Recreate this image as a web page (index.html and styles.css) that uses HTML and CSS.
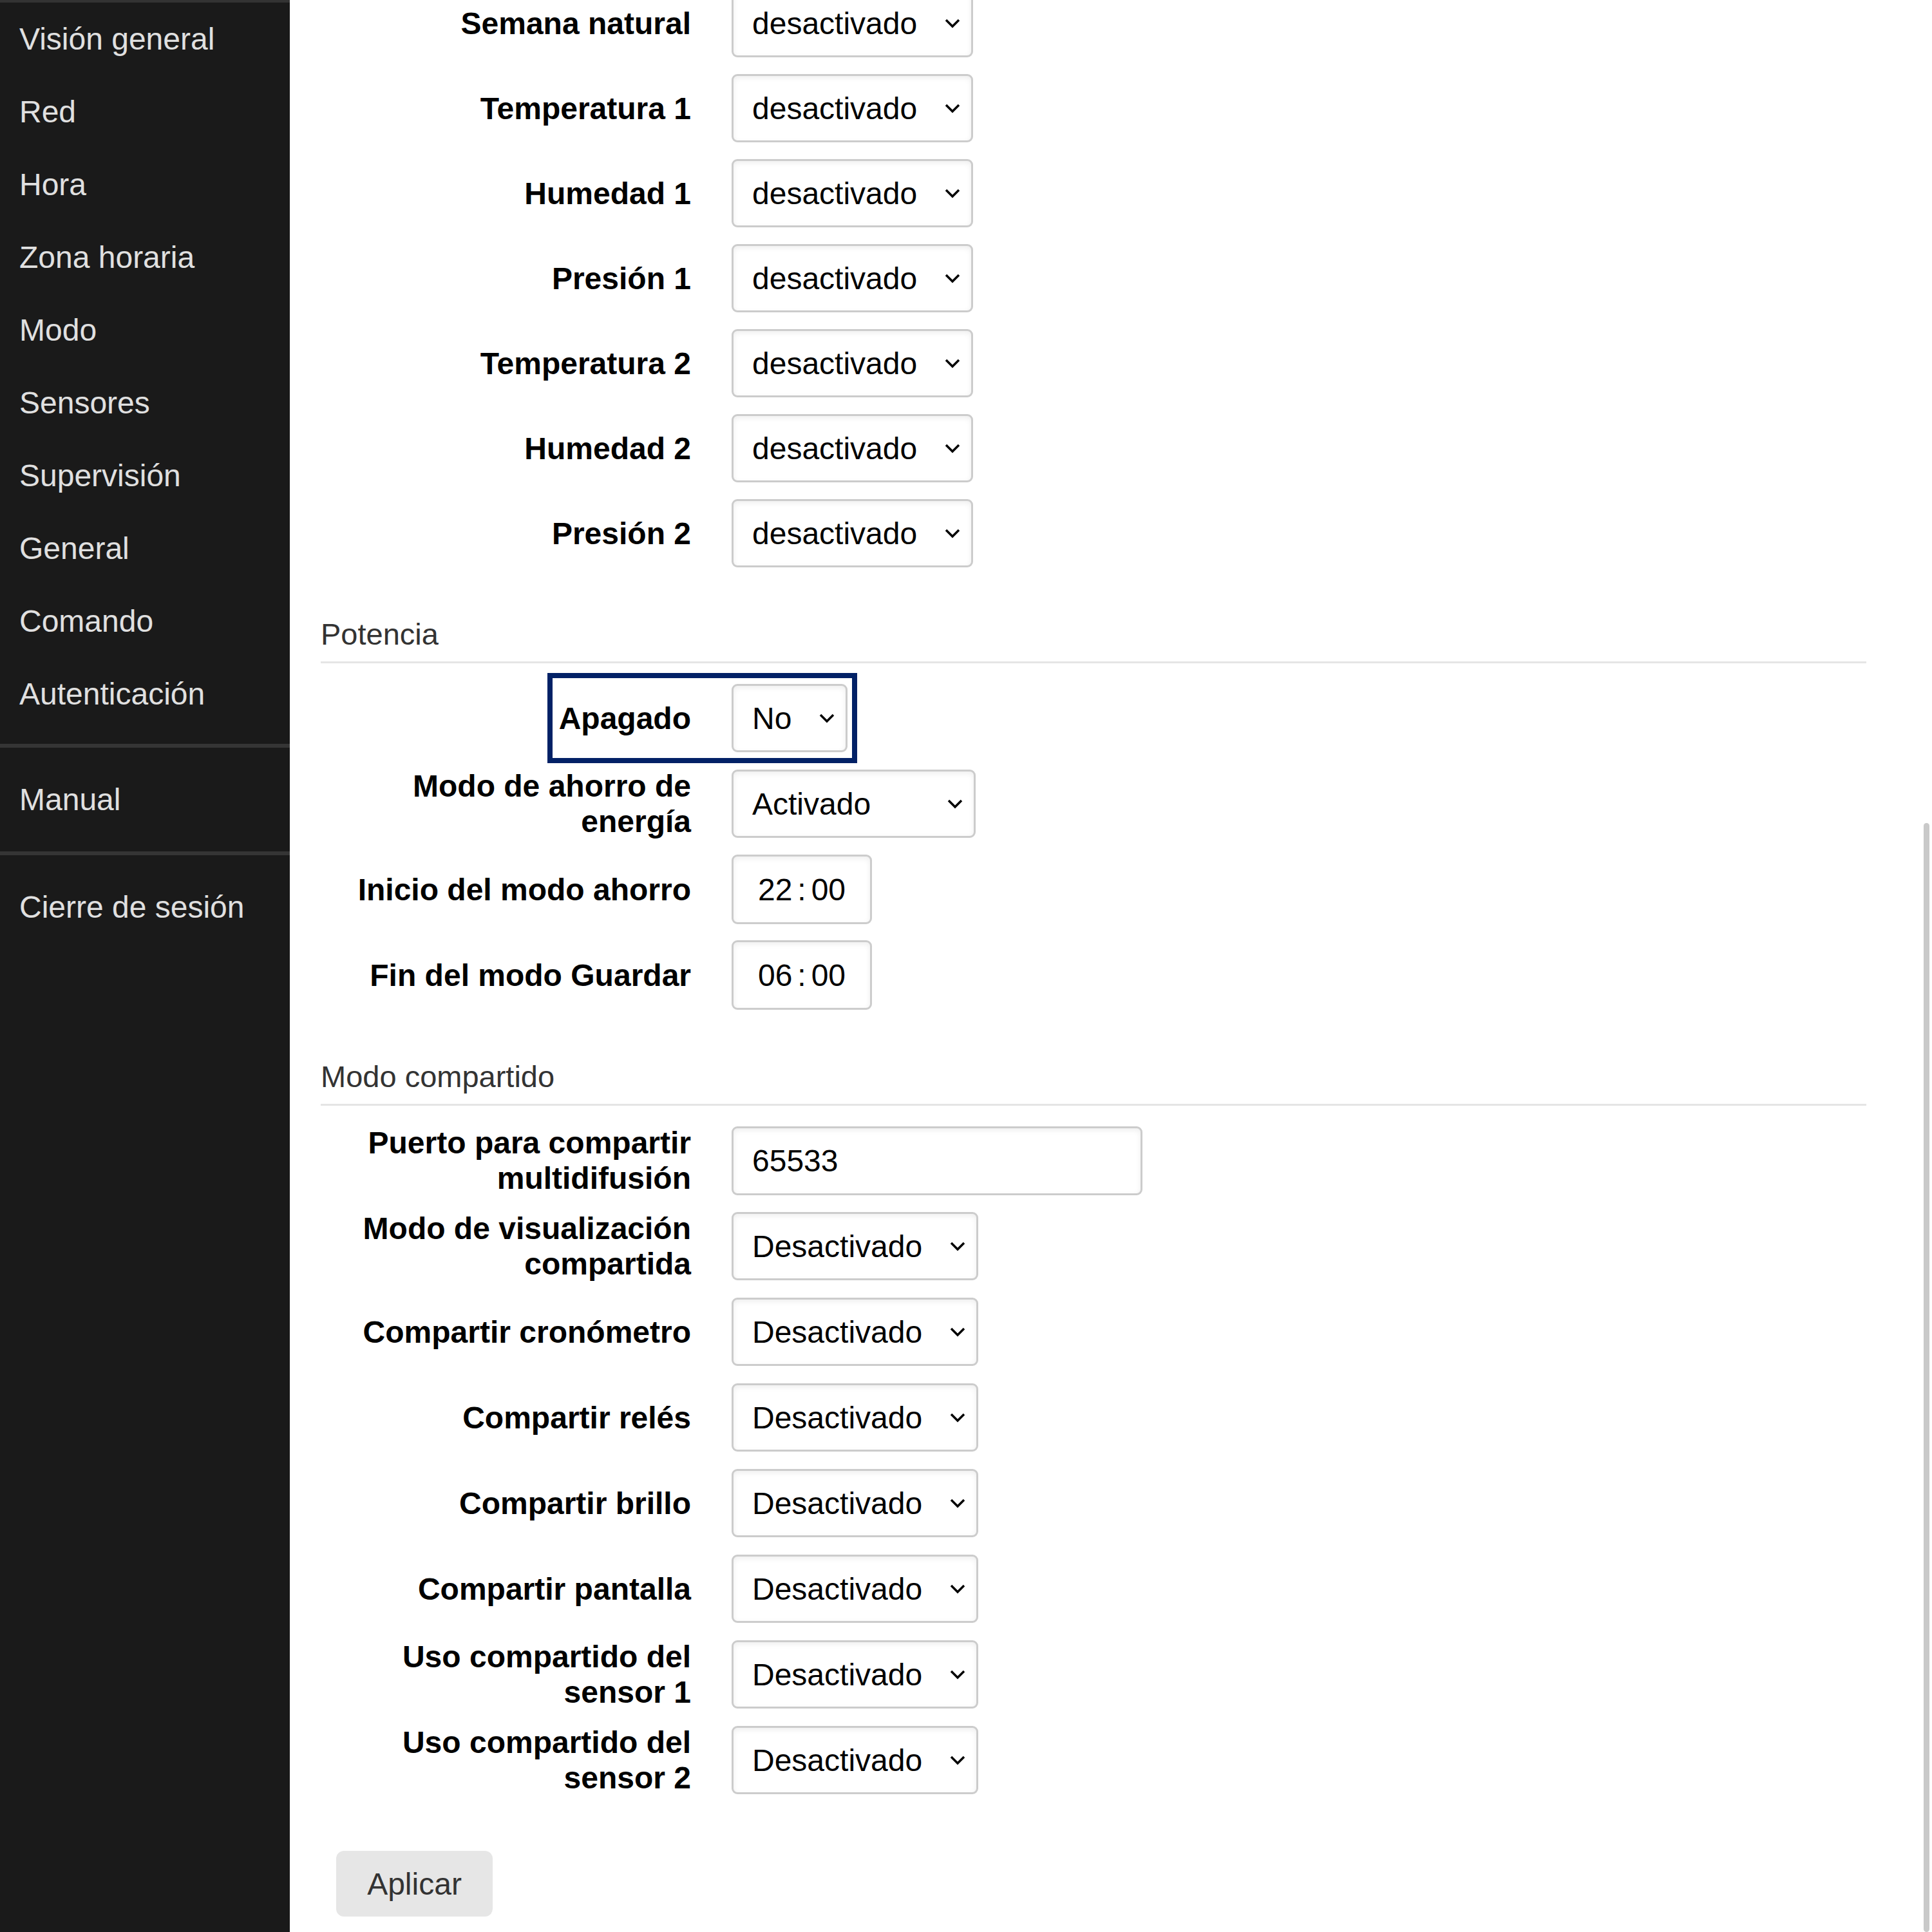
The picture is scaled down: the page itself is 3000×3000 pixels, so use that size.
FILE: index.html
```html
<!DOCTYPE html>
<html lang="es">
<head>
<meta charset="utf-8">
<title>Configuración</title>
<link rel="stylesheet" href="styles.css">
</head>
<body>
<nav class="sidebar">
  <a class="nav-link" href="#">Visión general</a>
  <a class="nav-link" href="#">Red</a>
  <a class="nav-link" href="#">Hora</a>
  <a class="nav-link" href="#">Zona horaria</a>
  <a class="nav-link" href="#">Modo</a>
  <a class="nav-link" href="#">Sensores</a>
  <a class="nav-link" href="#">Supervisión</a>
  <a class="nav-link" href="#">General</a>
  <a class="nav-link" href="#">Comando</a>
  <a class="nav-link" href="#">Autenticación</a>
  <div class="nav-divider first"></div>
  <a class="nav-link" href="#">Manual</a>
  <div class="nav-divider"></div>
  <a class="nav-link" href="#">Cierre de sesión</a>
</nav>

<main class="content">
  <div class="group group-top">
    <div class="row"><div class="label">Semana natural</div><div class="select"><span>desactivado</span><svg class="chev" width="24" height="15" viewBox="0 0 24 15"><path d="M2 2 L12 12 L22 2"/></svg></div></div>
    <div class="row"><div class="label">Temperatura 1</div><div class="select"><span>desactivado</span><svg class="chev" width="24" height="15" viewBox="0 0 24 15"><path d="M2 2 L12 12 L22 2"/></svg></div></div>
    <div class="row"><div class="label">Humedad 1</div><div class="select"><span>desactivado</span><svg class="chev" width="24" height="15" viewBox="0 0 24 15"><path d="M2 2 L12 12 L22 2"/></svg></div></div>
    <div class="row"><div class="label">Presión 1</div><div class="select"><span>desactivado</span><svg class="chev" width="24" height="15" viewBox="0 0 24 15"><path d="M2 2 L12 12 L22 2"/></svg></div></div>
    <div class="row"><div class="label">Temperatura 2</div><div class="select"><span>desactivado</span><svg class="chev" width="24" height="15" viewBox="0 0 24 15"><path d="M2 2 L12 12 L22 2"/></svg></div></div>
    <div class="row"><div class="label">Humedad 2</div><div class="select"><span>desactivado</span><svg class="chev" width="24" height="15" viewBox="0 0 24 15"><path d="M2 2 L12 12 L22 2"/></svg></div></div>
    <div class="row"><div class="label">Presión 2</div><div class="select"><span>desactivado</span><svg class="chev" width="24" height="15" viewBox="0 0 24 15"><path d="M2 2 L12 12 L22 2"/></svg></div></div>
  </div>

  <section class="section section-power">
    <h3 class="section-title">Potencia</h3>
    <div class="group">
      <div class="row focused"><div class="label">Apagado</div><div class="select"><span>No</span><svg class="chev" width="24" height="15" viewBox="0 0 24 15"><path d="M2 2 L12 12 L22 2"/></svg></div></div>
      <div class="row"><div class="label">Modo de ahorro de energía</div><div class="select wide"><span>Activado</span><svg class="chev" width="24" height="15" viewBox="0 0 24 15"><path d="M2 2 L12 12 L22 2"/></svg></div></div>
      <div class="row"><div class="label">Inicio del modo ahorro</div><div class="time-input"><span>22</span><span class="colon">:</span><span>00</span></div></div>
      <div class="row"><div class="label">Fin del modo Guardar</div><div class="time-input"><span>06</span><span class="colon">:</span><span>00</span></div></div>
    </div>
  </section>

  <section class="section section-shared">
    <h3 class="section-title">Modo compartido</h3>
    <div class="group">
      <div class="row"><div class="label">Puerto para compartir multidifusión</div><div class="text-input">65533</div></div>
      <div class="row"><div class="label">Modo de visualización compartida</div><div class="select"><span>Desactivado</span><svg class="chev" width="24" height="15" viewBox="0 0 24 15"><path d="M2 2 L12 12 L22 2"/></svg></div></div>
      <div class="row"><div class="label">Compartir cronómetro</div><div class="select"><span>Desactivado</span><svg class="chev" width="24" height="15" viewBox="0 0 24 15"><path d="M2 2 L12 12 L22 2"/></svg></div></div>
      <div class="row"><div class="label">Compartir relés</div><div class="select"><span>Desactivado</span><svg class="chev" width="24" height="15" viewBox="0 0 24 15"><path d="M2 2 L12 12 L22 2"/></svg></div></div>
      <div class="row"><div class="label">Compartir brillo</div><div class="select"><span>Desactivado</span><svg class="chev" width="24" height="15" viewBox="0 0 24 15"><path d="M2 2 L12 12 L22 2"/></svg></div></div>
      <div class="row"><div class="label">Compartir pantalla</div><div class="select"><span>Desactivado</span><svg class="chev" width="24" height="15" viewBox="0 0 24 15"><path d="M2 2 L12 12 L22 2"/></svg></div></div>
      <div class="row"><div class="label">Uso compartido del sensor 1</div><div class="select"><span>Desactivado</span><svg class="chev" width="24" height="15" viewBox="0 0 24 15"><path d="M2 2 L12 12 L22 2"/></svg></div></div>
      <div class="row"><div class="label">Uso compartido del sensor 2</div><div class="select"><span>Desactivado</span><svg class="chev" width="24" height="15" viewBox="0 0 24 15"><path d="M2 2 L12 12 L22 2"/></svg></div></div>
    </div>
  </section>

  <div class="actions"><button class="btn" type="button">Aplicar</button></div>
</main>

<div class="scrollbar"></div>
</body>
</html>
```

FILE: styles.css
```css
html, body {
  margin: 0;
  padding: 0;
  height: 3000px;
  overflow: hidden;
  background: #ffffff;
  font-family: "Liberation Sans", Arial, Helvetica, sans-serif;
}

body {
  display: flex;
  align-items: flex-start;
  position: relative;
}

.sidebar {
  width: 450px;
  flex-shrink: 0;
  height: 3000px;
  box-sizing: border-box;
  background: #1a1a1a;
  border-top: 4px solid #333333;
  display: flex;
  flex-direction: column;
}

.nav-link {
  display: block;
  height: 113px;
  line-height: 113px;
  padding-left: 30px;
  font-size: 48px;
  color: #e0e0e0;
  text-decoration: none;
  white-space: nowrap;
}

.nav-divider {
  height: 6px;
  flex-shrink: 0;
  background: #353535;
  margin: 24px 0;
}

.nav-divider.first {
  margin-top: 21px;
}

.content {
  flex: 1;
  display: flex;
  flex-direction: column;
  padding: 0 102px 0 48px;
  margin-top: -17px;
}

.group {
  display: flex;
  flex-direction: column;
  gap: 27px;
}

.group.group-top {
  gap: 26px;
}

.row {
  display: flex;
  align-items: center;
  height: 106px;
  position: relative;
}

.row.focused::after {
  content: "";
  position: absolute;
  left: 352px;
  top: -17px;
  width: 481px;
  height: 140px;
  box-sizing: border-box;
  border: 8px solid #022166;
  pointer-events: none;
}

.label {
  width: 575px;
  flex-shrink: 0;
  text-align: right;
  font-weight: bold;
  font-size: 48px;
  color: #000000;
  margin-right: 63px;
}

.select {
  display: inline-flex;
  align-items: center;
  justify-content: space-between;
  gap: 43px;
  height: 106px;
  box-sizing: border-box;
  padding: 0 17px 0 29px;
  border: 3px solid #cccccc;
  border-radius: 9px;
  background: #ffffff;
  box-shadow: inset 0 3px 8px rgba(0, 0, 0, 0.07);
  font-size: 48px;
  color: #000000;
  white-space: nowrap;
}

.select.wide {
  width: 379px;
}

.chev {
  flex-shrink: 0;
}

.chev path {
  fill: none;
  stroke: #000000;
  stroke-width: 3.5;
}

.time-input {
  width: 218px;
  height: 108px;
  box-sizing: border-box;
  border: 3px solid #cccccc;
  border-radius: 9px;
  box-shadow: inset 0 3px 8px rgba(0, 0, 0, 0.07);
  display: flex;
  align-items: center;
  justify-content: center;
  font-size: 48px;
  color: #000000;
}

.colon {
  margin: 0 8px;
}

.text-input {
  width: 638px;
  height: 107px;
  box-sizing: border-box;
  border: 3px solid #cccccc;
  border-radius: 9px;
  box-shadow: inset 0 3px 8px rgba(0, 0, 0, 0.07);
  display: flex;
  align-items: center;
  padding-left: 29px;
  font-size: 48px;
  color: #000000;
}

.section {
  display: flex;
  flex-direction: column;
}

.section-power {
  margin-top: 77px;
}

.section-shared {
  margin-top: 78px;
}

.section-title {
  margin: 0 0 32px;
  font-size: 47px;
  font-weight: normal;
  line-height: 54px;
  color: #333333;
  padding: 0 0 15px;
  border-bottom: 3px solid #e5e5e5;
}

.actions {
  margin-top: 88px;
  padding-left: 24px;
}

.btn {
  width: 243px;
  height: 102px;
  border: none;
  border-radius: 12px;
  background: #e6e6e6;
  color: #333333;
  font-family: "Liberation Sans", Arial, Helvetica, sans-serif;
  font-size: 48px;
  padding: 0;
}

.scrollbar {
  position: absolute;
  right: 4px;
  top: 1278px;
  width: 9px;
  height: 1722px;
  background: #c9c9c9;
  border-radius: 5px;
}
```
